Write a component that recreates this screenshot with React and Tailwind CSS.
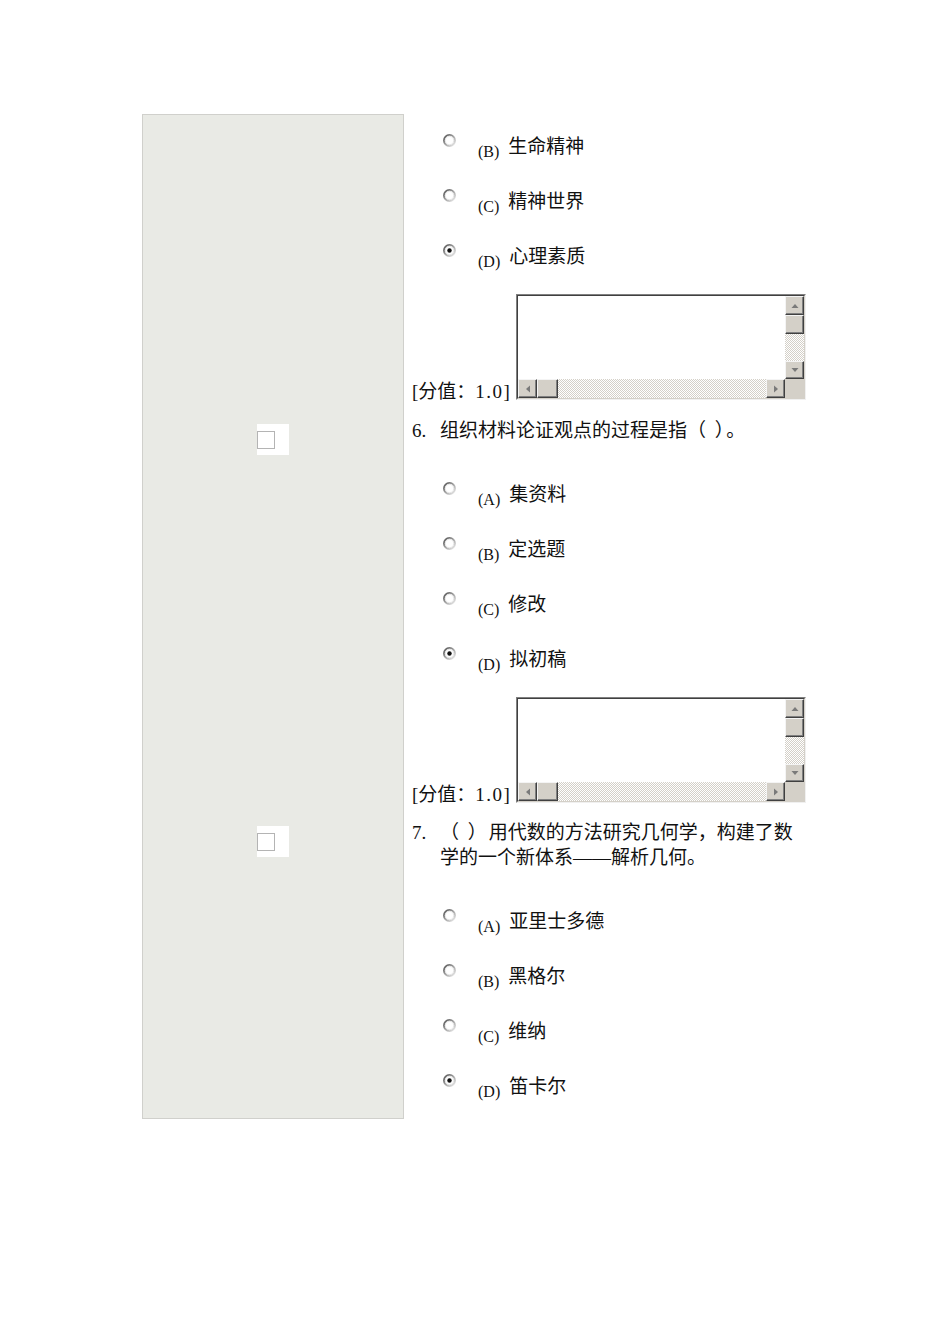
import React from 'react'

function Radio({ checked }) {
  return (
    <svg width="13" height="13" viewBox="0 0 13 13" className="shrink-0 mt-[1px]">
      <defs>
        <linearGradient id="ring" x1="0" y1="0" x2="1" y2="1">
          <stop offset="0" stopColor="#505050" />
          <stop offset="0.55" stopColor="#ababab" />
          <stop offset="1" stopColor="#f0f0f0" />
        </linearGradient>
      </defs>
      <circle cx="6.5" cy="6.5" r="5.6" fill="#fff" stroke="url(#ring)" strokeWidth="1.8" />
      <circle cx="6.5" cy="6.5" r="4.1" fill="none" stroke="#e0e0e0" strokeWidth="0.8" />
      {checked && <circle cx="6.5" cy="6.5" r="2.2" fill="#111" />}
    </svg>
  )
}

function Arrow({ dir }) {
  const pts = {
    up: '1.5,7 5,3 8.5,7',
    down: '1.5,3 5,7 8.5,3',
    left: '7,1.5 3,5 7,8.5',
    right: '3,1.5 7,5 3,8.5',
  }
  return (
    <svg width="10" height="10" viewBox="0 0 10 10">
      <polygon points={pts[dir]} fill="#7a7a7a" />
    </svg>
  )
}

function Btn({ children, className = '' }) {
  return (
    <div className={`flex items-center justify-center bg-[#d4d0c8] border border-t-[#f4f4f4] border-l-[#f4f4f4] border-r-[#404040] border-b-[#404040] shadow-[inset_-1px_-1px_#808080] ${className}`}>
      {children}
    </div>
  )
}

const track = 'bg-[image:repeating-conic-gradient(#d4d0c8_0_25%,#ffffff_0_50%)] bg-[length:2px_2px]'

function Memo() {
  return (
    <div className="w-[290px] h-[106px] shrink-0 border border-t-[#808080] border-l-[#808080] border-r-[#f0f0f0] border-b-[#f0f0f0]">
      <div className="flex flex-col h-full border border-t-[#404040] border-l-[#404040] border-r-[#d4d0c8] border-b-[#d4d0c8]">
        <div className="flex flex-1">
          <div className="flex-1 bg-white" />
          <div className="flex flex-col w-[19px]">
            <Btn className="h-[19px]"><Arrow dir="up" /></Btn>
            <Btn className="h-[19px]" />
            <div className={`flex-1 ${track}`} />
            <Btn className="h-[18px]"><Arrow dir="down" /></Btn>
          </div>
        </div>
        <div className="flex h-[19px]">
          <Btn className="w-[19px]"><Arrow dir="left" /></Btn>
          <Btn className="w-[21px]" />
          <div className={`flex-1 ${track}`} />
          <Btn className="w-[19px]"><Arrow dir="right" /></Btn>
          <div className="w-[19px] bg-[#d4d0c8]" />
        </div>
      </div>
    </div>
  )
}

function Option({ letter, text, checked, last }) {
  return (
    <div className={`flex items-start pl-[39px] ${last ? 'h-[46px]' : 'h-[55px]'}`}>
      <Radio checked={checked} />
      <span className="ml-[22px] mt-[7px] text-[16px] leading-[24px]">({letter})</span>
      <span className="ml-[9px] mt-[2px] text-[19px] leading-[24px]">{text}</span>
    </div>
  )
}

function Score() {
  return (
    <div className="flex items-end -mt-[4px]">
      <span className="text-[19px] leading-[16px] pl-[8px] w-[112px] shrink-0 whitespace-nowrap">
        [分值：<span className="tracking-[1.5px]">1.0</span>]
      </span>
      <Memo />
    </div>
  )
}

function LeftCell({ first, last, check }) {
  return (
    <div className={`w-[262px] shrink-0 bg-[#e9eae5] border-x border-[#d0d0cc] ${first ? 'border-t' : ''} ${last ? 'border-b' : ''}`}>
      {check && (
        <div className="mx-auto mt-[6px] w-[32px] h-[31px] bg-white flex items-center">
          <div className="w-[18px] h-[18px] border border-[#b4b4b4] bg-white" />
        </div>
      )}
    </div>
  )
}

function Question({ num, children }) {
  return (
    <div className="flex pl-[8px] text-[19px] leading-[25px]">
      <span className="w-[28px] shrink-0">{num}.</span>
      <span>{children}</span>
    </div>
  )
}

export default function App() {
  return (
    <div className="w-[950px] min-h-[1344px] bg-white text-[#111] font-['Liberation_Serif','Noto_Sans_CJK_SC',serif] pt-[114px] pl-[142px]">
      <div className="w-[664px]">
        <div className="flex">
          <LeftCell first />
          <div className="flex-1 pt-[19px] pb-[18px]">
            <Option letter="B" text="生命精神" />
            <Option letter="C" text="精神世界" />
            <Option letter="D" text="心理素质" checked />
            <Score />
          </div>
        </div>

        <div className="flex">
          <LeftCell check />
          <div className="flex-1 pb-[17px]">
            <Question num="6">
              组织材料论证观点的过程是指<span className="tracking-[2px]">（ ）</span>。
            </Question>
            <div className="mt-[38px]">
              <Option letter="A" text="集资料" />
              <Option letter="B" text="定选题" />
              <Option letter="C" text="修改" />
              <Option letter="D" text="拟初稿" checked />
            </div>
            <Score />
          </div>
        </div>

        <div className="flex">
          <LeftCell check last />
          <div className="flex-1">
            <Question num="7">
              <span className="tracking-[2px]">（ ）</span>用代数的方法研究几何学，构建了数<br />学的一个新体系——解析几何。
            </Question>
            <div className="mt-[38px]">
              <Option letter="A" text="亚里士多德" />
              <Option letter="B" text="黑格尔" />
              <Option letter="C" text="维纳" />
              <Option letter="D" text="笛卡尔" checked last />
            </div>
          </div>
        </div>
      </div>
    </div>
  )
}
